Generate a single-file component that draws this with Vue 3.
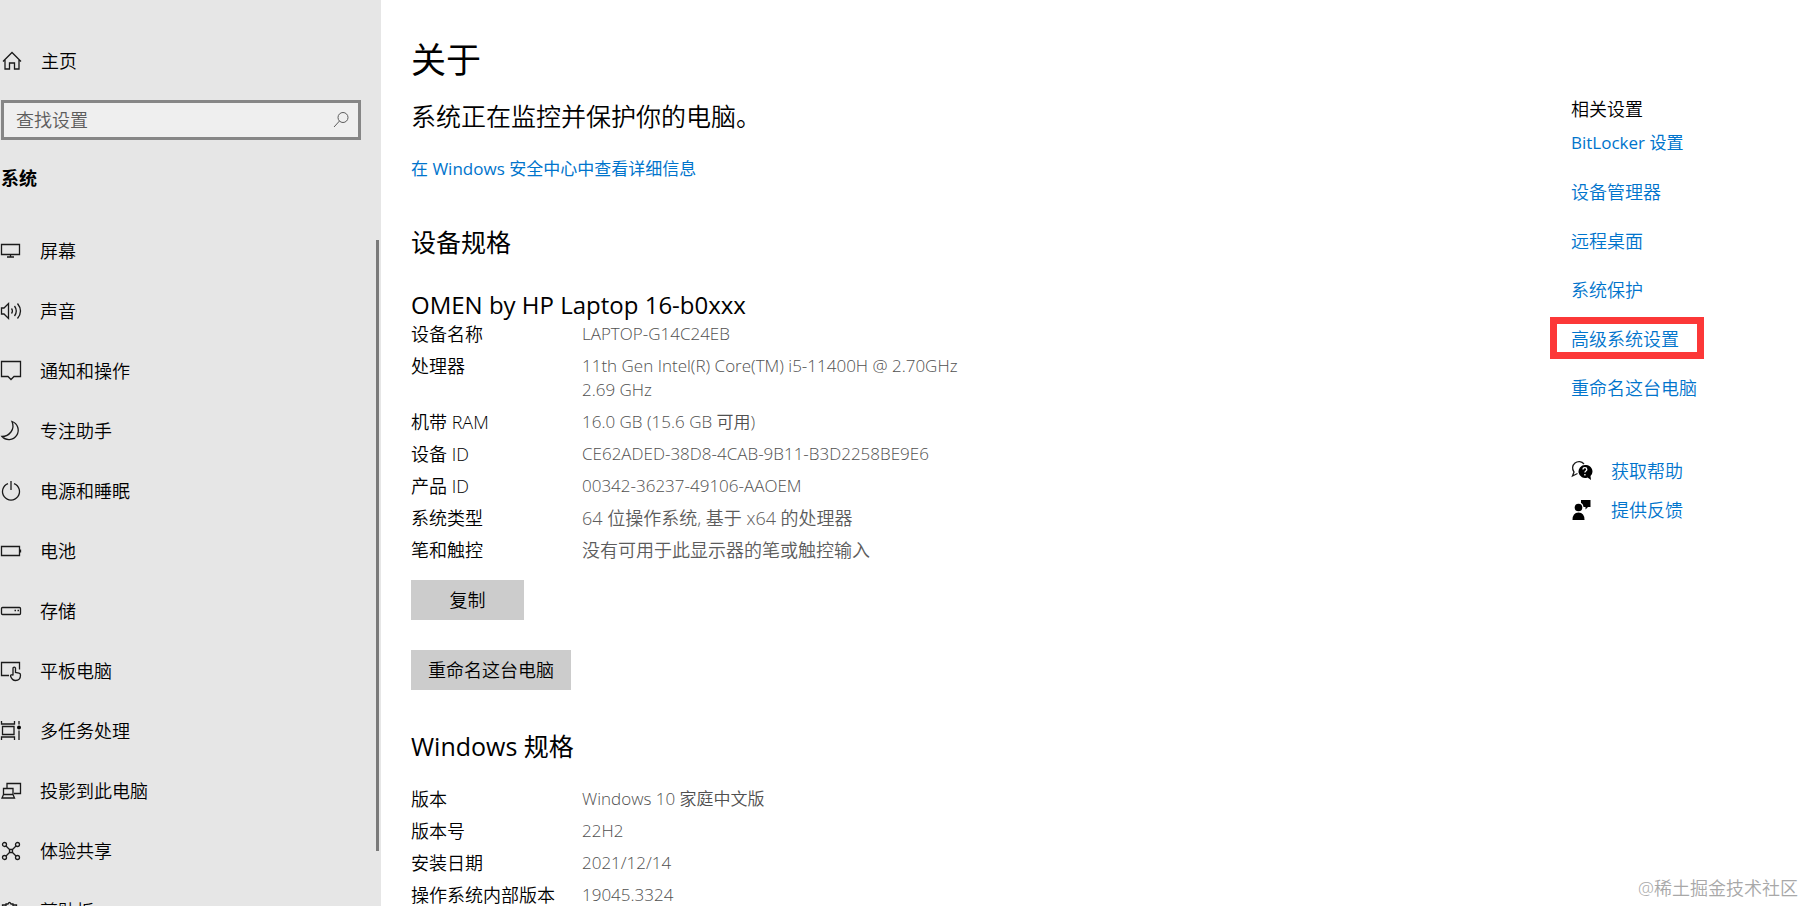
<script setup>
import { ref } from 'vue'

const query = ref('')

const navItems = [
  { id: 'display', label: '屏幕' },
  { id: 'sound', label: '声音' },
  { id: 'notify', label: '通知和操作' },
  { id: 'focus', label: '专注助手' },
  { id: 'power', label: '电源和睡眠' },
  { id: 'battery', label: '电池' },
  { id: 'storage', label: '存储' },
  { id: 'tablet', label: '平板电脑' },
  { id: 'multitask', label: '多任务处理' },
  { id: 'project', label: '投影到此电脑' },
  { id: 'share', label: '体验共享' },
  { id: 'clipboard', label: '剪贴板' },
]

const deviceSpecs = [
  ['设备名称', 'LAPTOP-G14C24EB'],
  ['处理器', '11th Gen Intel(R) Core(TM) i5-11400H @ 2.70GHz\n2.69 GHz'],
  ['机带 RAM', '16.0 GB (15.6 GB 可用)'],
  ['设备 ID', 'CE62ADED-38D8-4CAB-9B11-B3D2258BE9E6'],
  ['产品 ID', '00342-36237-49106-AAOEM'],
  ['系统类型', '64 位操作系统, 基于 x64 的处理器'],
  ['笔和触控', '没有可用于此显示器的笔或触控输入'],
]

const windowsSpecs = [
  ['版本', 'Windows 10 家庭中文版'],
  ['版本号', '22H2'],
  ['安装日期', '2021/12/14'],
  ['操作系统内部版本', '19045.3324'],
]

const related = [
  { label: 'BitLocker 设置', latin: true },
  { label: '设备管理器' },
  { label: '远程桌面' },
  { label: '系统保护' },
  { label: '高级系统设置', marked: true },
  { label: '重命名这台电脑' },
]

// Values with mostly Latin text are set one step smaller than Chinese ones.
const isLatin = (text) => (text.match(/[\u4e00-\u9fff]/g) || []).length < 6
</script>

<template>
  <div class="window">
    <aside class="sidebar">
      <a class="home" href="#">
        <svg class="icon" viewBox="0 0 22 22" aria-hidden="true">
          <path d="M3 11.5 12 2.5l9 9M5 10v9h4.5v-6h5v6H19v-9" />
        </svg>
        <span>主页</span>
      </a>
      <div class="search">
        <input v-model="query" type="text" placeholder="查找设置" aria-label="查找设置" />
        <svg class="search-icon" viewBox="0 0 18 18" aria-hidden="true">
          <circle cx="11" cy="6.500" r="5" />
          <path d="M7.500 10 2 16" />
        </svg>
      </div>
      <h2 class="group">系统</h2>
      <div class="nav-area">
        <nav>
          <a v-for="item in navItems" :key="item.id" class="nav-item" href="#">
            <svg class="icon" viewBox="0 0 22 22" aria-hidden="true">
              <template v-if="item.id === 'display'">
                <path d="M1.500 4.500h18v10h-18zM10.500 14.500v2.500M7 17h7" />
              </template>
              <template v-else-if="item.id === 'sound'">
                <path d="M1.500 8h2.500l4.500-4.500v15L4 14H1.500z" />
                <path d="M11.500 8.500q1.800 2.500 0 5M14.500 6q3.600 5 0 10M17.500 3.500q6 7.500 0 15" />
              </template>
              <template v-else-if="item.id === 'notify'">
                <path d="M1.500 1.500h19v15H14l-3 3-3-3H1.500z" />
              </template>
              <template v-else-if="item.id === 'focus'">
                <path d="M12 1.500A9.300 9.300 0 1 1 2 16.500C9 16.500 15.500 9.500 12 1.500z" />
              </template>
              <template v-else-if="item.id === 'power'">
                <path d="M8 3.600a8.500 8.500 0 1 0 6 0M11 1v9" />
              </template>
              <template v-else-if="item.id === 'battery'">
                <path d="M1.500 6.500h18v9h-18zM20.500 9.500v3" />
              </template>
              <template v-else-if="item.id === 'storage'">
                <rect x="1.500" y="7.500" width="19" height="7" rx="1" />
                <path d="M14.500 10.500h1.500M17.500 10.500h1.500" />
              </template>
              <template v-else-if="item.id === 'tablet'">
                <path d="M9 15.500H1.500v-13h18v7" />
                <path d="M13 15.500V8q1.300-1.800 2.500 0v4.500l3.500.7q1.500.3 1.500 1.800 0 5.500-5 5.500-3.500 0-5-4.500 0-1.700 2.500-1" />
              </template>
              <template v-else-if="item.id === 'multitask'">
                <path d="M1.500 1v3h13V1M2.500 6.500h11.500v8H2.500zM1.500 20v-3h13v3M19 1v3.500M19 10.500V20" />
                <circle class="solid" cx="19" cy="7.500" r="2" />
              </template>
              <template v-else-if="item.id === 'project'">
                <path d="M7 8.500v-5h13.500v10H14M3.500 8.500H13v6H3.500zM3.500 14.500 2 18h12.500l-1.500-3.500" />
              </template>
              <template v-else-if="item.id === 'share'">
                <circle cx="4.500" cy="4.500" r="2" />
                <circle cx="17.500" cy="4.500" r="2" />
                <circle cx="4.500" cy="17.500" r="2" />
                <circle cx="17.500" cy="17.500" r="2" />
                <path d="M9.500 9.500h3v3h-3zM6 6l3.500 3.500M16 6l-3.500 3.500M6 16l3.500-3.500M16 16l-3.500-3.500" />
              </template>
              <template v-else>
                <path d="M6 5H2.500v16h14V5H13M6 7V4h2q1.500-3 3 0h2v3z" />
              </template>
            </svg>
            <span>{{ item.label }}</span>
          </a>
        </nav>
        <div class="thumb"></div>
      </div>
    </aside>

    <main class="content">
      <h1>关于</h1>
      <p class="status">系统正在监控并保护你的电脑。</p>
      <p class="security"><a href="#">在 Windows 安全中心中查看详细信息</a></p>

      <h2>设备规格</h2>
      <h3>OMEN by HP Laptop 16-b0xxx</h3>
      <dl>
        <div v-for="[name, value] in deviceSpecs" :key="name" class="spec">
          <dt>{{ name }}</dt>
          <dd :class="{ latin: isLatin(value) }">{{ value }}</dd>
        </div>
      </dl>
      <div class="actions">
        <button type="button" class="copy">复制</button>
        <button type="button">重命名这台电脑</button>
      </div>

      <h2>Windows 规格</h2>
      <dl class="windows">
        <div v-for="[name, value] in windowsSpecs" :key="name" class="spec">
          <dt>{{ name }}</dt>
          <dd :class="{ latin: isLatin(value) }">{{ value }}</dd>
        </div>
      </dl>
    </main>

    <aside class="related">
      <h4>相关设置</h4>
      <ul class="links">
        <li v-for="link in related" :key="link.label" :class="{ 'latin-link': link.latin }">
          <a href="#" :class="{ marked: link.marked }">{{ link.label }}</a>
        </li>
      </ul>
      <ul class="support">
        <li>
          <svg class="icon" viewBox="0 0 22 22" aria-hidden="true">
            <path d="M6.500 13.500 1.500 16l1.500-4A6.200 6.200 0 1 1 13 4" />
            <path class="solid" d="M14 5a6.500 6.500 0 1 0 2.500 12.500L20 20l-.5-4A6.500 6.500 0 0 0 14 5z" />
            <path class="cut" d="M12 9.500q0-1.800 1.900-1.800t1.900 1.700q0 1-1 1.600-.9.600-.9 1.500M13.900 14v1.500" />
          </svg>
          <a href="#">获取帮助</a>
        </li>
        <li>
          <svg class="icon" viewBox="0 0 22 22" aria-hidden="true">
            <circle class="solid" cx="7.500" cy="8.500" r="3.800" />
            <path class="solid" d="M1.500 21q0-7.500 6-7.500t6 7.500z" />
            <path class="solid" d="M10 1h9.500v7H17l-2.500 2.500V8h-2Q12 4.500 10 4z" />
          </svg>
          <a href="#">提供反馈</a>
        </li>
      </ul>
    </aside>

    <p class="watermark">@稀土掘金技术社区</p>
  </div>
</template>

<style>
html,
body {
  margin: 0;
  background: #fff;
}
</style>

<style scoped>
.window {
  position: relative;
  display: flex;
  height: 100vh;
  overflow: hidden;
  color: #000;
  background: #fff;
  font: 350 18px/24px 'Open Sans', 'Noto Sans CJK SC', sans-serif;
}

h1,
h2,
h3,
h4,
p,
ul,
dl,
dd {
  margin: 0;
  padding: 0;
  font-weight: inherit;
}

h4 {
  font-size: 18px;
}

ul {
  list-style: none;
}

a {
  color: #0074cc;
  text-decoration: none;
}

.icon {
  flex: none;
  width: 22px;
  height: 22px;
  fill: none;
  stroke: #1a1a1a;
  stroke-width: 1.3;
}

.icon .solid {
  fill: #000;
  stroke: none;
}

.icon .cut {
  stroke: #fff;
}

.sidebar {
  display: flex;
  flex: none;
  flex-direction: column;
  box-sizing: border-box;
  width: 381px;
  padding-top: 41px;
  background: #e6e6e6;
}

.home,
.nav-item {
  display: flex;
  align-items: center;
  gap: 18px;
  color: #000;
}

.home {
  flex: none;
  gap: 19px;
  height: 40px;
}

.search {
  display: flex;
  align-items: center;
  flex: none;
  box-sizing: border-box;
  height: 40px;
  margin: 19px 20px 0 1px;
  padding-right: 8px;
  border: 3px solid #868686;
  background: #efefef;
}

.search input {
  flex: 1;
  min-width: 0;
  padding: 0 0 0 12px;
  border: 0;
  outline: 0;
  background: none;
  color: #000;
  font: inherit;
}

.search input::placeholder {
  color: #5c5c5c;
  opacity: 1;
}

.search-icon {
  width: 18px;
  height: 18px;
  fill: none;
  stroke: #5c5c5c;
}

.group {
  flex: none;
  margin: 26px 0 31px 1px;
  font-size: 18px;
  font-weight: 700;
}

.nav-area {
  display: flex;
  justify-content: space-between;
  flex: 1;
  min-height: 0;
}

.nav-item {
  height: 60px;
}

.thumb {
  width: 3px;
  margin: 19px 2px 55px 0;
  background: #7a7a7a;
}

.content {
  flex: 1;
  min-width: 0;
  padding: 36px 0 0 30px;
}

h1 {
  font-size: 35px;
  font-weight: 400;
  line-height: 48px;
}

.status,
.content h2 {
  font-size: 25px;
  line-height: 34px;
}

.status {
  margin-top: 15px;
}

.security {
  margin-top: 24px;
}

.content h2 {
  margin-top: 44px;
  font-weight: 400;
}

h3 {
  margin-top: 29px;
  font-size: 24px;
  font-weight: 400;
  line-height: 34px;
}

.security,
.latin-link {
  font-size: 17px;
  font-weight: 400;
}

.spec {
  display: grid;
  grid-template-columns: 171px 1fr;
  margin-bottom: 8px;
}

dd {
  color: #5c5c5c;
  white-space: pre-line;
}

.latin {
  color: #505050;
  font-size: 17px;
}

.actions {
  display: flex;
  flex-direction: column;
  align-items: flex-start;
  gap: 30px;
  margin-top: 18px;
}

button {
  height: 40px;
  padding: 0 17px;
  border: 0;
  background: #ccc;
  color: #000;
  font: inherit;
}

.copy {
  min-width: 113px;
}

.content .actions + h2 {
  margin-top: 39px;
}

.windows {
  margin-top: 24px;
}

.related {
  flex: none;
  width: 233px;
  padding-top: 97px;
}

.links {
  display: flex;
  flex-direction: column;
  gap: 25px;
  margin-top: 10px;
}

.marked {
  position: relative;
}

.marked::after {
  position: absolute;
  inset: -10px -25px -8px -21px;
  border: 7px solid #fc3838;
  content: '';
}

.support {
  display: flex;
  flex-direction: column;
  gap: 15px;
  margin-top: 59px;
}

.support li {
  display: flex;
  align-items: center;
  gap: 18px;
}

.watermark {
  position: absolute;
  right: 6px;
  bottom: 6px;
  color: #a8a8a8;
}
</style>
